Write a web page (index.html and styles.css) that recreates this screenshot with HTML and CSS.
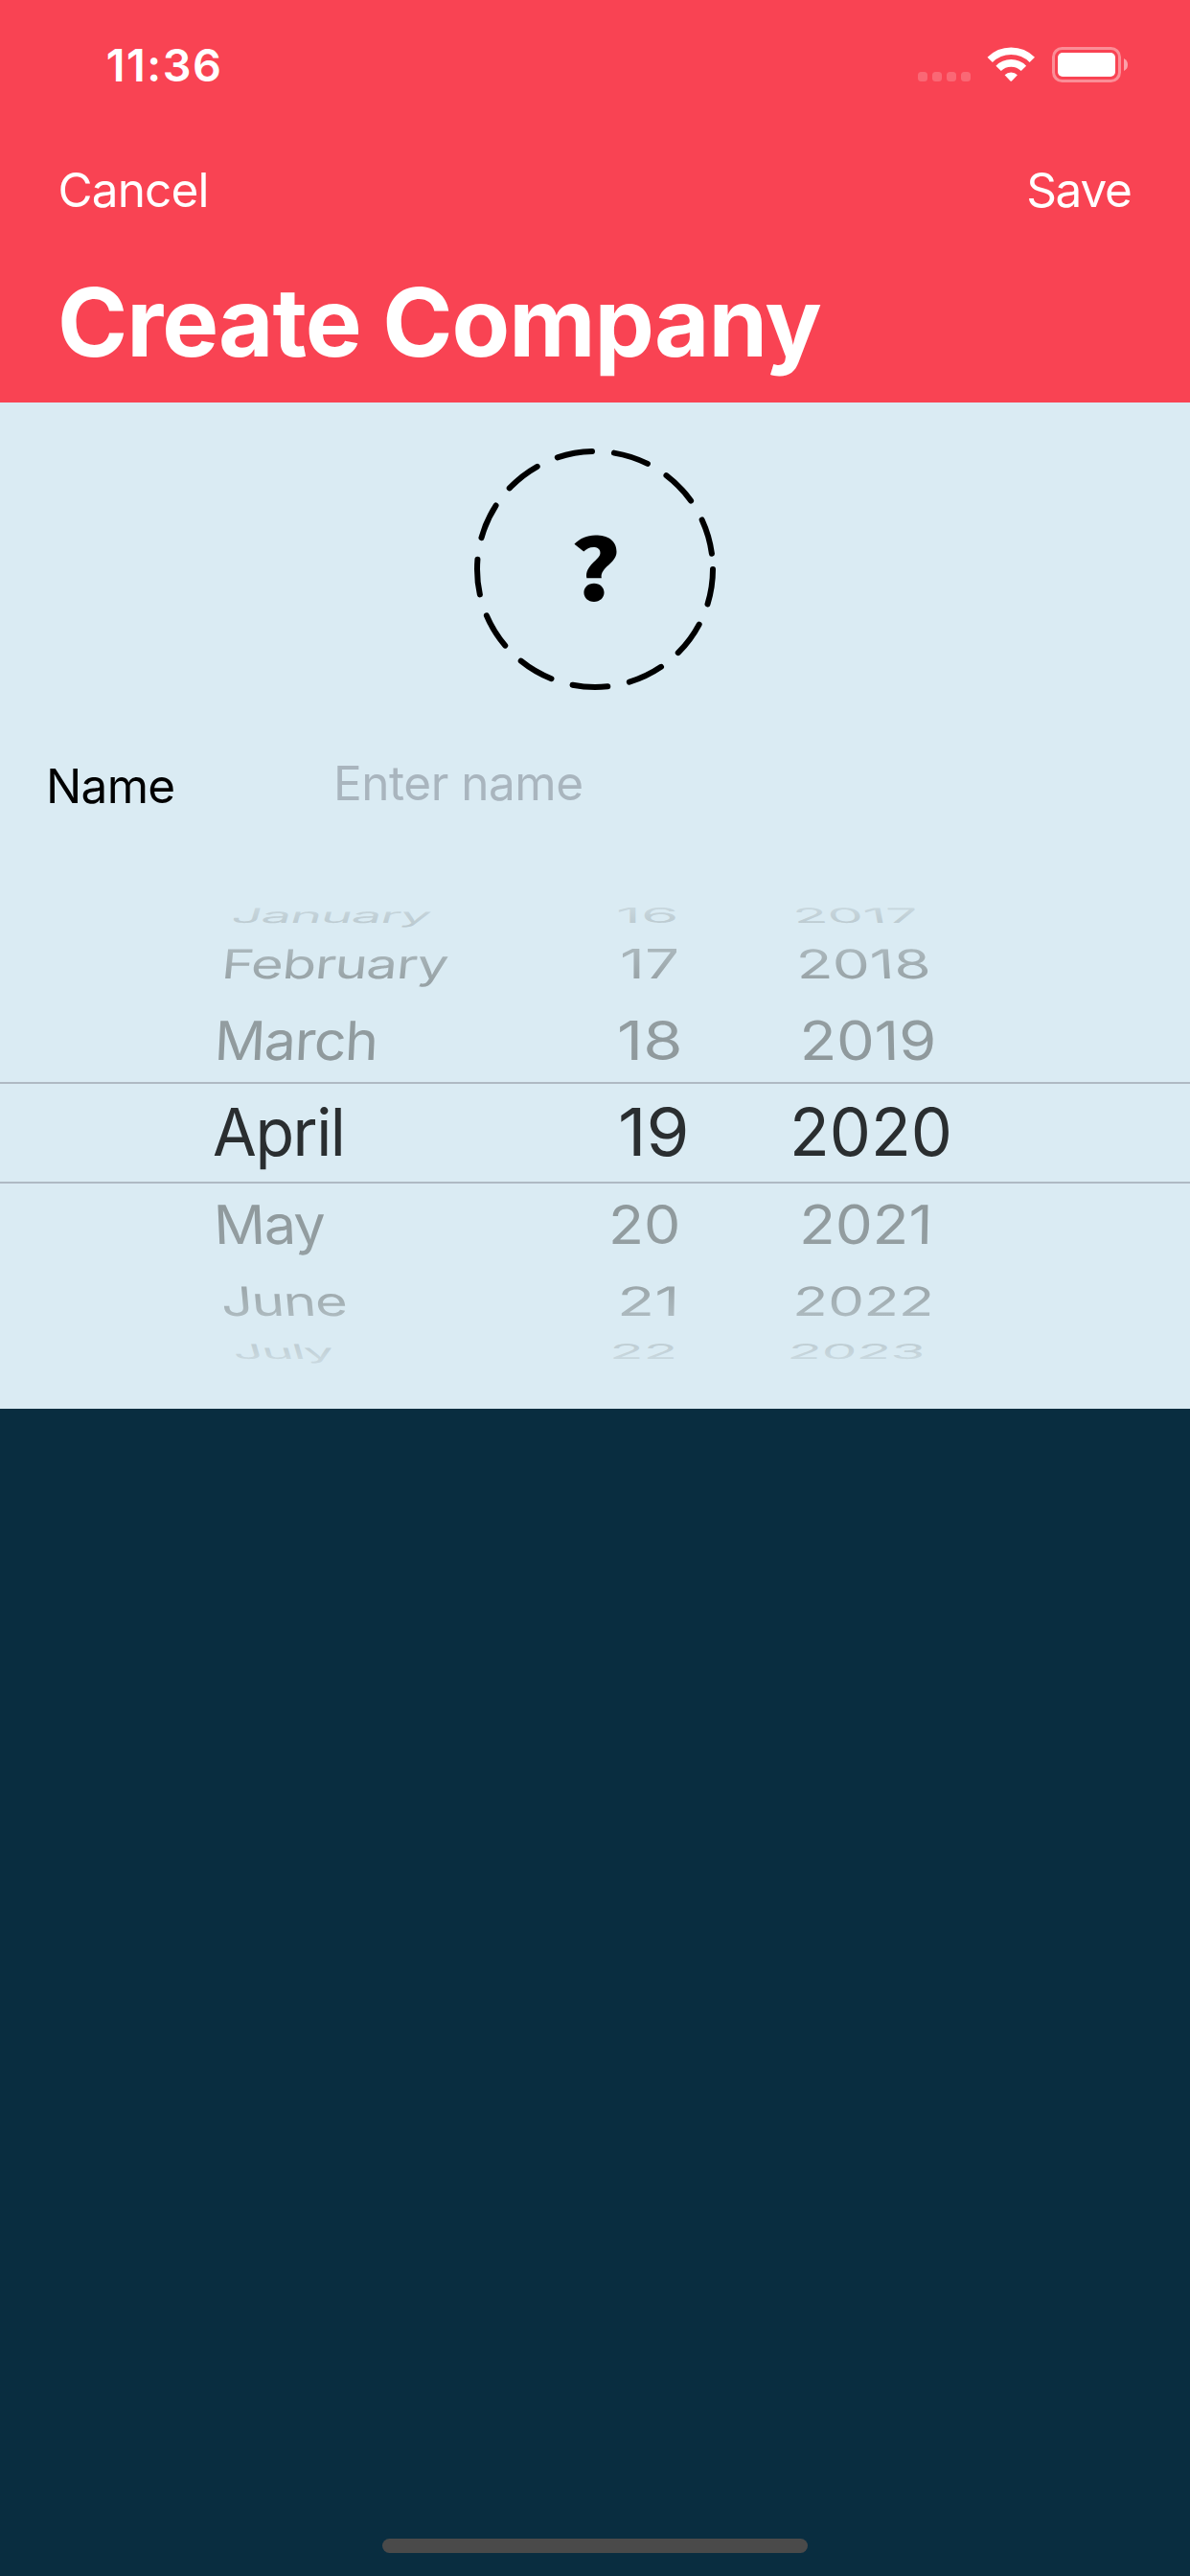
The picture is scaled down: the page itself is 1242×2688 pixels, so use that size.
FILE: index.html
```html
<!DOCTYPE html>
<html lang="en">
<head>
<meta charset="utf-8">
<title>Create Company</title>
<link rel="stylesheet" href="styles.css">
</head>
<body>
<div class="screen">
  <header class="header">
    <div class="status">
      <span class="time">11:36</span>
      <svg class="status-icons" width="222" height="45" viewBox="0 0 222 45">
        <g fill="#fff" fill-opacity=".2">
          <rect x="0" y="30" width="10" height="10" rx="3.5"/>
          <rect x="15" y="30" width="10" height="10" rx="3.5"/>
          <rect x="30" y="30" width="10" height="10" rx="3.5"/>
          <rect x="45" y="30" width="10" height="10" rx="3.5"/>
        </g>
        <g fill="none" stroke="#fff" stroke-width="7.6">
          <path d="M75.2 17.4A31.2 31.2 0 0 1 119.3 17.4"/>
          <path d="M84.1 26.4A18.5 18.5 0 0 1 110.4 26.4"/>
        </g>
        <path fill="#fff" d="M90.6 33.2A9.5 9.5 0 0 1 103.9 33.2L98 39.4Q97.25 40 96.5 39.4Z"/>
        <rect x="141.5" y="5.5" width="69" height="34" rx="9" fill="none" stroke="#fff" stroke-opacity=".4" stroke-width="3"/>
        <rect x="146" y="10" width="60" height="25" rx="5" fill="#fff"/>
        <path fill="#fff" fill-opacity=".5" d="M215 16Q219 18 219 22.5T215 29Z"/>
      </svg>
    </div>
    <nav class="nav"><span>Cancel</span><span class="save">Save</span></nav>
    <h1 class="title">Create Company</h1>
  </header>

  <main class="form">
    <svg class="photo" width="252" height="252" viewBox="0 0 252 252">
      <circle cx="126" cy="126" r="123" fill="none" stroke="#000" stroke-width="6" stroke-linecap="round" stroke-dasharray="36.9 23.04"/>
      <text class="mark" transform="translate(99.8 159.4) scale(1.14 1)">?</text>
    </svg>
    <div class="field">
      <label class="label" for="name">Name</label>
      <input class="input" id="name" type="text" placeholder="Enter name">
    </div>
    <div class="wheel">
      <div class="row january"><span>January</span><span>16</span><span>2017</span></div>
      <div class="row february"><span>February</span><span>17</span><span>2018</span></div>
      <div class="row march"><span>March</span><span>18</span><span>2019</span></div>
      <div class="row selected"><span>April</span><span>19</span><span>2020</span></div>
      <div class="row may"><span>May</span><span>20</span><span>2021</span></div>
      <div class="row june"><span>June</span><span>21</span><span>2022</span></div>
      <div class="row july"><span>July</span><span>22</span><span>2023</span></div>
    </div>
  </main>
  <footer class="footer"><div class="home-bar"></div></footer>
</div>
</body>
</html>
```
FILE: styles.css
```css
* { box-sizing: border-box; }
body { margin: 0; font-family: Inter, "Liberation Sans", sans-serif; background: #092d40; }
.screen { width: 1242px; height: 2688px; display: flex; flex-direction: column; overflow: hidden; background: #092d40; }

.header { height: 420px; background: #f94353; color: #fff; }
.status { height: 132px; display: flex; justify-content: space-between; align-items: flex-start; padding: 38px 62px 0 110.8px; }
.time { font-size: 46.8px; font-weight: 600; line-height: 60px; letter-spacing: 1.5px; }
.status-icons { margin-top: 7px; }
.nav { height: 132px; display: flex; justify-content: space-between; align-items: center; padding: 0 61.5px 0 60.5px; font-size: 49.5px; line-height: 60px; letter-spacing: -.86px; }
.save { letter-spacing: -1.3px; }
.title { margin: 0; padding-left: 60px; font-size: 99px; font-weight: 700; line-height: 144px; letter-spacing: -1px; }

.form { height: 1050px; padding-top: 48px; background: #daebf3; display: flex; flex-direction: column; }
.photo { align-self: center; flex: none; }
.mark { font: 900 87.5px "Noto Sans CJK JP", sans-serif; }
.field { height: 192px; padding: 67px 48px 0; display: flex; align-items: flex-start; font-size: 49.5px; line-height: 60px; }
.label { width: 300px; margin-top: 3px; letter-spacing: -.7px; color: #000; }
.input { flex: 1; height: 60px; padding: 0; border: 0; outline: 0; background: none; font: inherit; letter-spacing: -.48px; }
.input::placeholder { color: #a9b5be; opacity: 1; }

/* Date wheel: each row ends on its text baseline; cells are squashed about that line */
.wheel { position: relative; height: 558px; font-size: 68.5px; line-height: 50px; color: #8f999c; }
.wheel::after {
  content: ""; position: absolute; inset: 0; pointer-events: none;
  background: linear-gradient(
    rgba(218,235,243,.76) 35px, rgba(218,235,243,.62) 50px, rgba(218,235,243,.37) 79px,
    rgba(218,235,243,.13) 109px, rgba(218,235,243,.05) 153px, rgba(218,235,243,0) 194px,
    rgba(218,235,243,0) 345px, rgba(218,235,243,.06) 386px, rgba(218,235,243,.16) 430px,
    rgba(218,235,243,.4) 461px, rgba(218,235,243,.62) 489px, rgba(218,235,243,.76) 505px);
}
.row { display: grid; grid-template-columns: 620px 180px 1fr; align-items: end; }
.row span { justify-self: start; margin-left: var(--x); transform: matrix(var(--w), 0, var(--lean, 0), var(--h, 1), 0, 1); transform-origin: 0 100%; }
.row span:first-child { letter-spacing: -1.5px; }

.january { height: 50px; --h: .31; }
.january span:nth-child(1) { --x: 240px; --w: .82; --lean: -.09; }
.january span:nth-child(2) { --x: 22.5px; --w: .93; }
.january span:nth-child(3) { --x: 28.6px; --w: .865; --lean: .06; }

.february { height: 59px; --h: .61; }
.february span:nth-child(1) { --x: 229.5px; --w: .848; --lean: -.06; }
.february span:nth-child(2) { --x: 26.5px; --w: .93; }
.february span:nth-child(3) { --x: 31.8px; --w: .905; --lean: .04; }

.march { height: 85px; margin-bottom: 23px; --h: .82; }
.march span:nth-child(1) { --x: 222.5px; --w: .862; --lean: -.04; }
.march span:nth-child(2) { --x: 23.5px; --w: .975; }
.march span:nth-child(3) { --x: 34.8px; --w: .92; --lean: .02; }

.selected { height: 106px; padding-bottom: 27px; border: solid #afb9c3; border-width: 2px 0; color: #2a2e30; }
.selected span:nth-child(1) { --x: 221.7px; --w: .97; }
.selected span:nth-child(2) { --x: 24.8px; --w: 1.06; }
.selected span:nth-child(3) { --x: 24px; --w: 1; }

.may { height: 63px; --h: .82; }
.may span:nth-child(1) { --x: 224px; --w: .868; --lean: .035; }
.may span:nth-child(2) { --x: 14.7px; --w: .887; }
.may span:nth-child(3) { --x: 33.8px; --w: .9; --lean: -.015; }

.june { height: 74.5px; --h: .61; }
.june span:nth-child(1) { --x: 232.3px; --w: .848; --lean: .055; }
.june span:nth-child(2) { --x: 23.5px; --w: .934; --lean: -.01; }
.june span:nth-child(3) { --x: 26.8px; --w: .874; --lean: -.03; }

.july { height: 50px; margin-top: -6px; --h: .31; }
.july span:nth-child(1) { --x: 245px; --w: .81; --lean: .09; }
.july span:nth-child(2) { --x: 16px; --w: .851; --lean: -.01; }
.july span:nth-child(3) { --x: 21px; --w: .85; --lean: -.05; }

.footer { flex: 1; display: flex; justify-content: center; align-items: flex-end; padding-bottom: 24px; }
.home-bar { width: 444px; height: 15px; border-radius: 7.5px; background: #4a4a4a; }
```
